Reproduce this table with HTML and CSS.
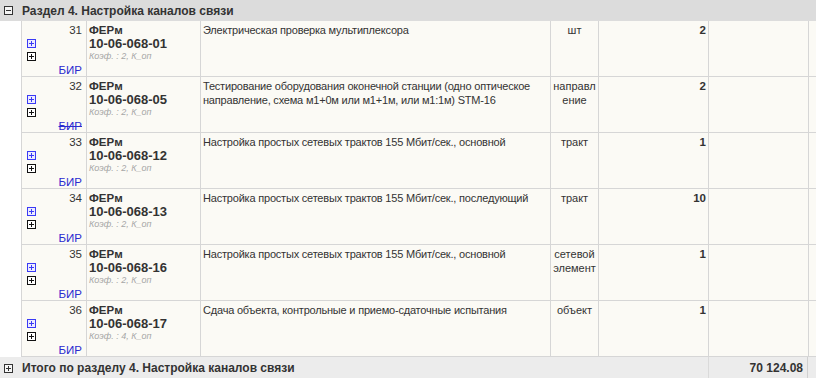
FILE: index.html
```html
<!DOCTYPE html>
<html lang="ru">
<head>
<meta charset="utf-8">
<title>Раздел 4</title>
<link rel="stylesheet" href="styles.css">
</head>
<body>
<div class="sec-head">
  <span class="tgl"><svg width="9" height="9" viewBox="0 0 9 9"><rect x="0.5" y="0.5" width="8" height="8" fill="#f4f4f4" stroke="#333"/><path d="M2 4.5h5" stroke="#333"/></svg></span>
  <span class="sec-title">Раздел 4. Настройка каналов связи</span>
</div>
<table class="grid">
  <tr>
    <td class="c1"><div class="numcell"><span class="num">31</span><span class="ico blue"><svg width="9" height="9" viewBox="0 0 9 9"><rect x="0.5" y="0.5" width="8" height="8" fill="#ececff" stroke="#3a3af5"/><path d="M2 4.5h5M4.5 2v5" stroke="#3a3af5"/></svg></span><span class="ico"><svg width="9" height="9" viewBox="0 0 9 9"><rect x="0.5" y="0.5" width="8" height="8" fill="#fff" stroke="#111"/><path d="M2 4.5h5M4.5 2v5" stroke="#111"/></svg></span><span class="bir">БИР</span></div></td>
    <td class="c2"><div class="code1">ФЕРм</div><div class="code2">10-06-068-01</div><div class="koef">Коэф. : 2, К_оп</div></td>
    <td class="c3">Электрическая проверка мультиплексора</td>
    <td class="c4">шт</td>
    <td class="c5">2</td>
    <td class="c6"></td>
    <td class="c7"></td>
  </tr>
  <tr>
    <td class="c1"><div class="numcell"><span class="num">32</span><span class="ico blue"><svg width="9" height="9" viewBox="0 0 9 9"><rect x="0.5" y="0.5" width="8" height="8" fill="#ececff" stroke="#3a3af5"/><path d="M2 4.5h5M4.5 2v5" stroke="#3a3af5"/></svg></span><span class="ico"><svg width="9" height="9" viewBox="0 0 9 9"><rect x="0.5" y="0.5" width="8" height="8" fill="#fff" stroke="#111"/><path d="M2 4.5h5M4.5 2v5" stroke="#111"/></svg></span><span class="bir strike">БИР</span></div></td>
    <td class="c2"><div class="code1">ФЕРм</div><div class="code2">10-06-068-05</div><div class="koef">Коэф. : 2, К_оп</div></td>
    <td class="c3">Тестирование оборудования оконечной станции (одно оптическое направление, схема м1+0м или м1+1м, или м1:1м) STM-16</td>
    <td class="c4 brk">направление</td>
    <td class="c5">2</td>
    <td class="c6"></td>
    <td class="c7"></td>
  </tr>
  <tr>
    <td class="c1"><div class="numcell"><span class="num">33</span><span class="ico blue"><svg width="9" height="9" viewBox="0 0 9 9"><rect x="0.5" y="0.5" width="8" height="8" fill="#ececff" stroke="#3a3af5"/><path d="M2 4.5h5M4.5 2v5" stroke="#3a3af5"/></svg></span><span class="ico"><svg width="9" height="9" viewBox="0 0 9 9"><rect x="0.5" y="0.5" width="8" height="8" fill="#fff" stroke="#111"/><path d="M2 4.5h5M4.5 2v5" stroke="#111"/></svg></span><span class="bir">БИР</span></div></td>
    <td class="c2"><div class="code1">ФЕРм</div><div class="code2">10-06-068-12</div><div class="koef">Коэф. : 2, К_оп</div></td>
    <td class="c3">Настройка простых сетевых трактов 155 Мбит/сек., основной</td>
    <td class="c4">тракт</td>
    <td class="c5">1</td>
    <td class="c6"></td>
    <td class="c7"></td>
  </tr>
  <tr>
    <td class="c1"><div class="numcell"><span class="num">34</span><span class="ico blue"><svg width="9" height="9" viewBox="0 0 9 9"><rect x="0.5" y="0.5" width="8" height="8" fill="#ececff" stroke="#3a3af5"/><path d="M2 4.5h5M4.5 2v5" stroke="#3a3af5"/></svg></span><span class="ico"><svg width="9" height="9" viewBox="0 0 9 9"><rect x="0.5" y="0.5" width="8" height="8" fill="#fff" stroke="#111"/><path d="M2 4.5h5M4.5 2v5" stroke="#111"/></svg></span><span class="bir">БИР</span></div></td>
    <td class="c2"><div class="code1">ФЕРм</div><div class="code2">10-06-068-13</div><div class="koef">Коэф. : 2, К_оп</div></td>
    <td class="c3">Настройка простых сетевых трактов 155 Мбит/сек., последующий</td>
    <td class="c4">тракт</td>
    <td class="c5">10</td>
    <td class="c6"></td>
    <td class="c7"></td>
  </tr>
  <tr>
    <td class="c1"><div class="numcell"><span class="num">35</span><span class="ico blue"><svg width="9" height="9" viewBox="0 0 9 9"><rect x="0.5" y="0.5" width="8" height="8" fill="#ececff" stroke="#3a3af5"/><path d="M2 4.5h5M4.5 2v5" stroke="#3a3af5"/></svg></span><span class="ico"><svg width="9" height="9" viewBox="0 0 9 9"><rect x="0.5" y="0.5" width="8" height="8" fill="#fff" stroke="#111"/><path d="M2 4.5h5M4.5 2v5" stroke="#111"/></svg></span><span class="bir">БИР</span></div></td>
    <td class="c2"><div class="code1">ФЕРм</div><div class="code2">10-06-068-16</div><div class="koef">Коэф. : 2, К_оп</div></td>
    <td class="c3">Настройка простых сетевых трактов 155 Мбит/сек., основной</td>
    <td class="c4">сетевой элемент</td>
    <td class="c5">1</td>
    <td class="c6"></td>
    <td class="c7"></td>
  </tr>
  <tr>
    <td class="c1"><div class="numcell"><span class="num">36</span><span class="ico blue"><svg width="9" height="9" viewBox="0 0 9 9"><rect x="0.5" y="0.5" width="8" height="8" fill="#ececff" stroke="#3a3af5"/><path d="M2 4.5h5M4.5 2v5" stroke="#3a3af5"/></svg></span><span class="ico"><svg width="9" height="9" viewBox="0 0 9 9"><rect x="0.5" y="0.5" width="8" height="8" fill="#fff" stroke="#111"/><path d="M2 4.5h5M4.5 2v5" stroke="#111"/></svg></span><span class="bir">БИР</span></div></td>
    <td class="c2"><div class="code1">ФЕРм</div><div class="code2">10-06-068-17</div><div class="koef">Коэф. : 4, К_оп</div></td>
    <td class="c3">Сдача объекта, контрольные и приемо-сдаточные испытания</td>
    <td class="c4">объект</td>
    <td class="c5">1</td>
    <td class="c6"></td>
    <td class="c7"></td>
  </tr>
</table>
<div class="sec-foot">
  <span class="tgl"><svg width="9" height="9" viewBox="0 0 9 9"><rect x="0.5" y="0.5" width="8" height="8" fill="#f6f6f6" stroke="#333"/><path d="M2 4.5h5M4.5 2v5" stroke="#333"/></svg></span>
  <span class="foot-title">Итого по разделу 4. Настройка каналов связи</span>
  <span class="foot-sum">70 124.08</span>
  <span class="foot-rest"></span>
</div>
</body>
</html>
```
FILE: styles.css
```css
html, body {
  margin: 0;
  padding: 0;
  background: #ffffff;
  overflow: hidden;
}
body {
  width: 816px;
  font-family: "Liberation Sans", Arial, sans-serif;
  font-size: 11px;
  color: #333333;
}
.sec-head {
  height: 21px;
  background: #dcdcdc;
  display: flex;
  align-items: center;
}
.tgl {
  width: 22px;
  display: flex;
  align-items: center;
  padding-left: 4px;
  box-sizing: border-box;
}
.tgl svg { display: block; }
.sec-title, .foot-title {
  font-weight: bold;
  font-size: 12px;
  color: #333333;
}
.grid {
  margin-left: 21px;
  width: 795px;
  table-layout: fixed;
  border-collapse: separate;
  border-spacing: 0;
  background: #fbfaf5;
}
.grid td {
  box-sizing: border-box;
  border-right: 1px solid #d6d6d6;
  border-bottom: 1px solid #d6d6d6;
  vertical-align: top;
  padding: 2px 2px 0 2px;
  line-height: 14px;
  height: 56px;
}
.grid td.c1 { width: 66px; border-left: 1px solid #d6d6d6; padding: 0; }
.grid td.c2 { width: 114px; }
.grid td.c3 { width: 350px; letter-spacing: -0.2px; }
.grid td.c4 { width: 48px; text-align: center; padding-left: 1px; padding-right: 1px; }
.grid td.c5 { width: 110px; text-align: right; font-weight: bold; font-size: 11.5px; padding-right: 2px; }
.grid td.c6 { width: 100px; }
.grid td.c7 { border-right: none; }
.brk { word-break: break-all; }
.numcell {
  height: 55px;
  display: flex;
  flex-direction: column;
  align-items: flex-start;
}
.num {
  align-self: stretch;
  text-align: right;
  padding: 2px 4px 0 0;
  line-height: 14px;
  font-size: 11.5px;
}
.ico {
  display: block;
  margin-left: 5px;
  height: 9px;
}
.ico svg { display: block; }
.ico.blue { margin-top: 2px; margin-bottom: 4px; }
.bir {
  margin-top: auto;
  align-self: flex-end;
  padding-right: 4px;
  color: #2b2bd0;
  line-height: 12px;
  font-size: 11.5px;
}
.strike { text-decoration: line-through; }
.code1 { font-weight: bold; font-size: 11.5px; line-height: 14px; }
.code2 { font-weight: bold; font-size: 13px; line-height: 14px; }
.koef {
  font-style: italic;
  font-size: 9px;
  line-height: 10px;
  color: #a6a6a6;
}
.sec-foot {
  height: 22px;
  background: #ececec;
  display: flex;
  align-items: center;
}
.foot-title { flex: 1; }
.foot-sum {
  width: 100px;
  box-sizing: border-box;
  align-self: stretch;
  border-left: 1px solid #dadada;
  border-right: 1px solid #d0d0d0;
  text-align: right;
  font-weight: bold;
  font-size: 12px;
  padding: 4px 4px 0 0;
}
.foot-rest { width: 8px; }
```
